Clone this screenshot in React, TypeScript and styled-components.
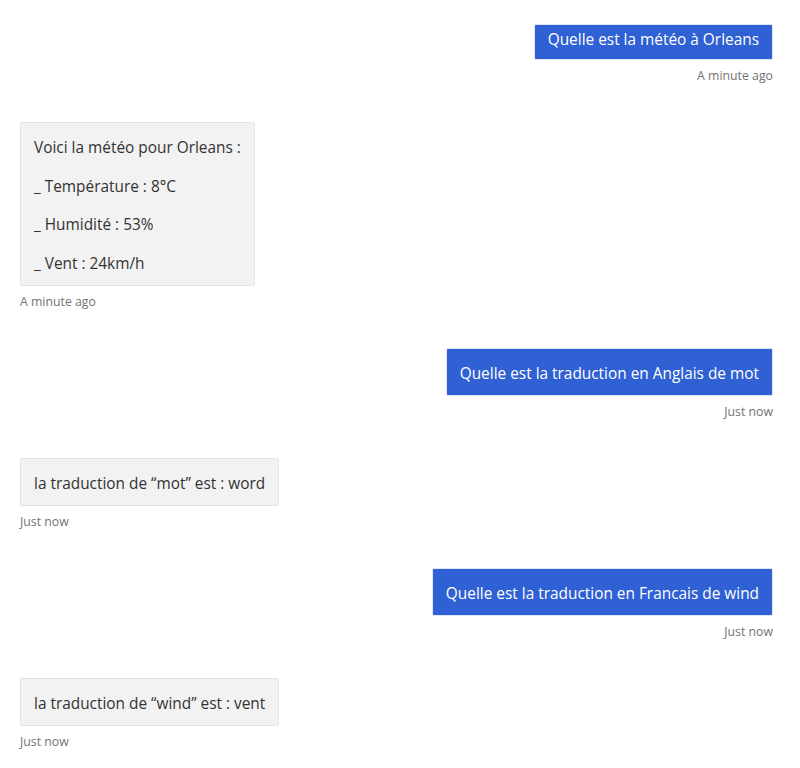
import React from "react";
import styled, { createGlobalStyle } from "styled-components";

const Global = createGlobalStyle`
  html, body { margin: 0; padding: 0; background: #ffffff; }
  body { font-family: "Open Sans", "Noto Sans", sans-serif; }
`;

const Transcript = styled.div`
  display: flex;
  flex-direction: column;
  gap: 37px;
  padding: 24px 27px 20px 20px;
  width: 800px;
  box-sizing: border-box;
`;

const Activity = styled.div<{ $user?: boolean }>`
  display: flex;
  flex-direction: column;
  align-items: ${(p) => (p.$user ? "flex-end" : "flex-start")};
`;

const Bubble = styled.div<{ $user?: boolean; $clipped?: boolean }>`
  box-sizing: border-box;
  border-radius: 2px;
  border: 1px solid ${(p) => (p.$user ? "#dfe6f7" : "#e3e3e3")};
  background: ${(p) => (p.$user ? "#2f60d4" : "#f2f2f2")};
  color: ${(p) => (p.$user ? "#ffffff" : "#323232")};
  font-size: 15.4px;
  line-height: 20px;
  padding: ${(p) => (p.$clipped ? "5px 13px 9px" : "15px 13px 11px")};
`;

const Para = styled.p`
  margin: 0;
  white-space: nowrap;
  & + & { margin-top: 18.5px; }
`;

const Stamp = styled.div`
  margin-top: 7px;
  font-size: 12.3px;
  line-height: 18px;
  color: #737373;
`;

type Msg = { user?: boolean; lines: string[]; time: string; clipped?: boolean };

const messages: Msg[] = [
  { user: true, clipped: true, lines: ["Quelle est la météo à Orleans"], time: "A minute ago" },
  {
    lines: [
      "Voici la météo pour Orleans :",
      "_ Température : 8°C",
      "_ Humidité : 53%",
      "_ Vent : 24km/h",
    ],
    time: "A minute ago",
  },
  { user: true, lines: ["Quelle est la traduction en Anglais de mot"], time: "Just now" },
  { lines: ["la traduction de “mot” est : word"], time: "Just now" },
  { user: true, lines: ["Quelle est la traduction en Francais de wind"], time: "Just now" },
  { lines: ["la traduction de “wind” est : vent"], time: "Just now" },
];

export default function App() {
  return (
    <>
      <Global />
      <Transcript>
        {messages.map((m, i) => (
          <Activity key={i} $user={m.user}>
            <Bubble $user={m.user} $clipped={m.clipped}>
              {m.lines.map((l, j) => (
                <Para key={j}>{l}</Para>
              ))}
            </Bubble>
            <Stamp>{m.time}</Stamp>
          </Activity>
        ))}
      </Transcript>
    </>
  );
}
